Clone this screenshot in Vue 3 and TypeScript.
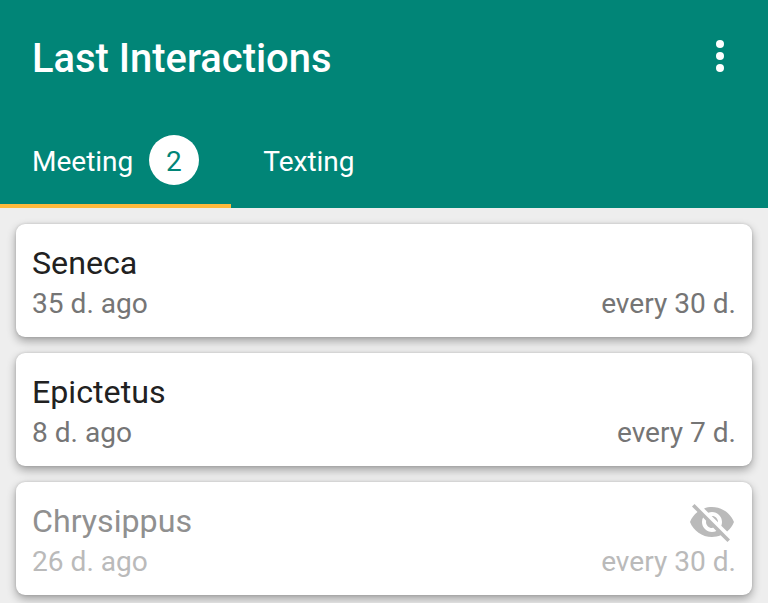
<script setup lang="ts">
interface Contact {
  name: string
  last: string
  interval: string
  hidden?: boolean
}

const contacts: Contact[] = [
  { name: 'Seneca', last: '35 d. ago', interval: 'every 30 d.' },
  { name: 'Epictetus', last: '8 d. ago', interval: 'every 7 d.' },
  { name: 'Chrysippus', last: '26 d. ago', interval: 'every 30 d.', hidden: true },
]
</script>

<template>
  <div class="screen">
    <header class="appbar">
      <div class="toolbar">
        <h1>Last Interactions</h1>
        <svg class="more" viewBox="0 0 8 32"><circle cx="4" cy="4" r="4" /><circle cx="4" cy="16" r="4" /><circle cx="4" cy="28" r="4" /></svg>
      </div>
      <nav class="tabs">
        <div class="tab active"><span class="label">Meeting</span><span class="badge">2</span></div>
        <div class="tab"><span class="label">Texting</span></div>
      </nav>
    </header>
    <main class="list">
      <article v-for="c in contacts" :key="c.name" class="card" :class="{ muted: c.hidden }">
        <div class="row">
          <span class="name">{{ c.name }}</span>
          <svg v-if="c.hidden" class="eye" viewBox="0 0 24 24">
            <path d="M12 7c2.760 0 5 2.240 5 5 0 .65-.13 1.260-.36 1.830l2.920 2.920c1.510-1.260 2.700-2.890 3.430-4.750-1.730-4.390-6-7.500-11-7.500-1.400 0-2.740.25-3.980.7l2.160 2.160C10.740 7.130 11.350 7 12 7zM2 4.270l2.280 2.280.46.46C3.080 8.300 1.780 10.020 1 12c1.730 4.390 6 7.500 11 7.500 1.550 0 3.030-.3 4.380-.84l.42.42L19.730 22 21 20.730 3.270 3 2 4.270zM7.530 9.800l1.550 1.550c-.05.21-.08.43-.08.65 0 1.660 1.340 3 3 3 .22 0 .44-.03.65-.08l1.550 1.550c-.67.33-1.410.53-2.200.53-2.760 0-5-2.240-5-5 0-.79.2-1.530.53-2.200zm4.310-.78l3.150 3.150.02-.16c0-1.660-1.340-3-3-3l-.17.01z" />
          </svg>
        </div>
        <div class="row details"><span>{{ c.last }}</span><span>{{ c.interval }}</span></div>
      </article>
    </main>
  </div>
</template>

<style>
body { margin: 0; overflow: hidden; }
</style>

<style scoped>
.screen { box-sizing: border-box; height: 603px; overflow: hidden; background: #eee; font-family: Roboto, sans-serif; }
.appbar { height: 208px; background: #018577; color: #fff; }
.toolbar { box-sizing: border-box; height: 112px; padding: 6px 44px 0 32px; display: flex; align-items: center; justify-content: space-between; }
h1 { margin: 0; font-size: 39.9px; line-height: 48px; font-weight: 500; }
.more { width: 8px; height: 32px; margin-top: -6px; fill: #fff; }
.tabs { display: flex; height: 96px; }
.tab { box-sizing: border-box; display: flex; align-items: center; gap: 16px; padding: 4px 32px 0; font-size: 28px; border-bottom: 4px solid transparent; }
.label { padding-top: 2px; }
.active { border-color: #ffb93c; }
.badge { width: 50px; height: 50px; border-radius: 50%; background: #fff; color: #018577; line-height: 53px; text-align: center; text-indent: -1px; }
.list { display: flex; flex-direction: column; gap: 16px; padding: 16px; }
.card { box-sizing: border-box; height: 113px; flex: none; padding: 19px 16px 0; border-radius: 9px; background: #fff; box-shadow: 0 4px 10px rgba(0, 0, 0, .33), 0 0 3px rgba(0, 0, 0, .14); color: #212121; }
.row { display: flex; justify-content: space-between; align-items: center; height: 40px; }
.name { font-size: 32.200px; }
.details { font-size: 28.100px; color: #757575; }
.eye { width: 48px; height: 48px; margin-top: 2px; fill: #bababa; }
.muted .name { color: #909090; }
.muted .details { color: #bababa; }
</style>
